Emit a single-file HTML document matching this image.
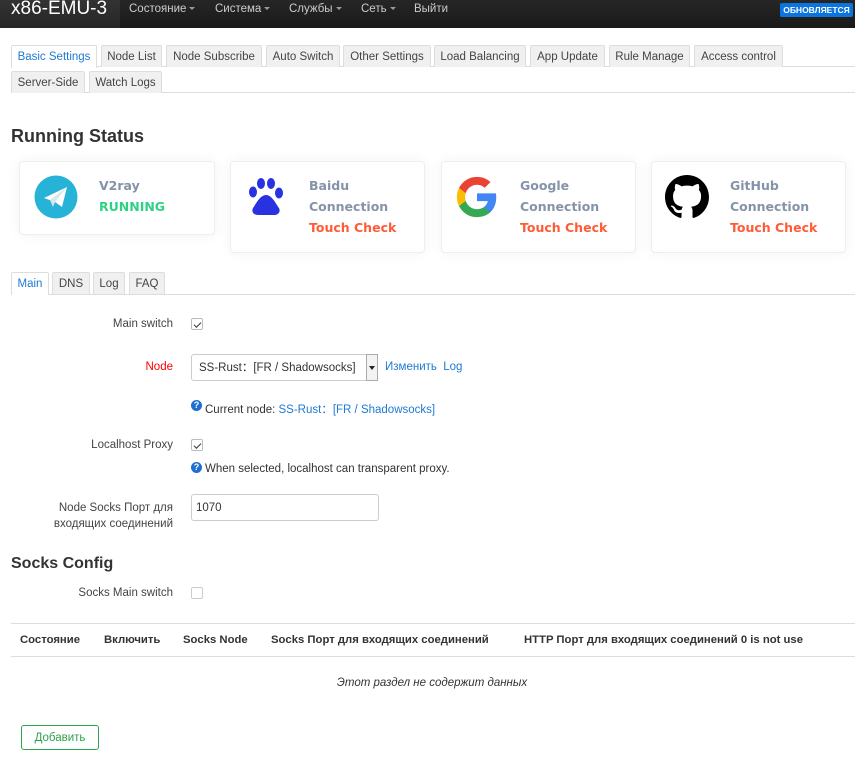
<!DOCTYPE html>
<html><head><meta charset="utf-8"><style>
*{box-sizing:border-box;margin:0;padding:0}
body{width:855px;height:757px;background:#fff;font-family:"Liberation Sans",sans-serif;color:#333;position:relative;overflow:hidden}
.a{position:absolute;white-space:nowrap}
.nav{left:0;top:0;width:855px;height:28px;background:linear-gradient(#262626,#1a1a1a)}
.brand{left:0;top:0;width:120px;height:28px;background:linear-gradient(#333,#262626);color:#fff;font-size:19px;padding:0 0 0 11px;line-height:18px}
.m{top:3px;color:#ccc;font-size:11.5px}
.car{display:inline-block;border-top:3px solid #999;border-left:3px solid transparent;border-right:3px solid transparent;vertical-align:middle;margin-left:3px}
.badge{left:780px;top:3px;width:73px;height:14px;background:#0b74de;border-radius:2px;color:#fff;font-size:8.5px;font-weight:bold;text-align:center;line-height:14px}
.tab{height:22px;border:1px solid #ddd;border-bottom:none;background:#f0f0f0;font-size:11.5px;text-align:center;line-height:23px;color:#444;border-radius:2px 2px 0 0}
.tab.on{background:#fff;color:#1e7ad2;height:23px}
.line{height:1px;background:#ddd}
.card{background:#fff;border:1px solid #eee;border-radius:4px;box-shadow:0 0 14px rgba(0,0,0,.05)}
.ct{font-family:"DejaVu Sans",sans-serif;font-weight:bold;font-size:12.5px;color:#8593a8}
.lbl{font-size:11.5px;color:#444;text-align:right;width:173px;left:0}
.cb{width:12px;height:12px;border:1px solid #bbb;border-radius:2px;background:#fff}
.ck{position:absolute;left:2px;width:7px;height:4px;border-left:1.5px solid #333;border-bottom:1.5px solid #333;transform:rotate(-45deg);top:3px}
.q{width:11px;height:11px;border-radius:50%;background:#1e6fd0;color:#fff;font-size:9px;font-weight:bold;text-align:center;line-height:11px}
.th{top:634px;font-size:11.3px;font-weight:bold;color:#333}
</style></head><body>
<div class="a nav"></div>
<div class="a brand">x86-EMU-3</div>
<div class="a m" style="left:129px">Состояние<span class="car"></span></div>
<div class="a m" style="left:215px">Система<span class="car"></span></div>
<div class="a m" style="left:289px">Службы<span class="car"></span></div>
<div class="a m" style="left:361px">Сеть<span class="car"></span></div>
<div class="a m" style="left:414px">Выйти</div>
<div class="a badge">ОБНОВЛЯЕТСЯ</div>

<div class="a line" style="left:11px;top:66px;width:844px"></div>
<div class="a tab on" style="left:11px;top:45px;width:86px">Basic Settings</div>
<div class="a tab" style="left:101px;top:45px;width:61px">Node List</div>
<div class="a tab" style="left:166px;top:45px;width:96px">Node Subscribe</div>
<div class="a tab" style="left:266px;top:45px;width:74px">Auto Switch</div>
<div class="a tab" style="left:343px;top:45px;width:88px">Other Settings</div>
<div class="a tab" style="left:434px;top:45px;width:92px">Load Balancing</div>
<div class="a tab" style="left:530px;top:45px;width:75px">App Update</div>
<div class="a tab" style="left:609px;top:45px;width:81px">Rule Manage</div>
<div class="a tab" style="left:694px;top:45px;width:89px">Access control</div>
<div class="a line" style="left:11px;top:92px;width:844px"></div>
<div class="a tab" style="left:11px;top:71px;width:74px">Server-Side</div>
<div class="a tab" style="left:89px;top:71px;width:73px">Watch Logs</div>

<div class="a" style="left:11px;top:126px;font-size:18px;font-weight:bold;color:#333">Running Status</div>

<div class="a card" style="left:19px;top:161px;width:196px;height:74px"></div>
<div class="a card" style="left:230px;top:161px;width:195px;height:92px"></div>
<div class="a card" style="left:441px;top:161px;width:195px;height:92px"></div>
<div class="a card" style="left:651px;top:161px;width:195px;height:92px"></div>

<svg class="a" style="left:34px;top:175px" width="44" height="44" viewBox="0 0 44 44"><circle cx="22" cy="22" r="21.5" fill="#27b2d8"/><path d="M10 23 L33 12 L28 32 L21 27 Z" fill="#fff"/><path d="M16 25 L33 12 L21 27 L19 32 Z" fill="#d8e6ee"/></svg>
<div class="a ct" style="left:99px;top:178px">V2ray</div>
<div class="a ct" style="left:99px;top:199px;color:#2fd283">RUNNING</div>

<svg class="a" style="left:248px;top:177px" width="36" height="38" viewBox="0 0 36 38"><ellipse cx="5" cy="15" rx="4" ry="5.5" fill="#2932e1"/><ellipse cx="13" cy="6.5" rx="4" ry="5.5" fill="#2932e1"/><ellipse cx="23" cy="6.5" rx="4" ry="5.5" fill="#2932e1"/><ellipse cx="31" cy="16" rx="4" ry="5.5" fill="#2932e1"/><path d="M18 18 C12 18 8 27 5 31 C3 35 6 38 10 38 L26 38 C30 38 33 35 31 31 C28 27 24 18 18 18 Z" fill="#2932e1"/></svg>
<div class="a ct" style="left:309px;top:178px">Baidu</div>
<div class="a ct" style="left:309px;top:199px">Connection</div>
<div class="a ct" style="left:309px;top:220px;color:#ff5b36">Touch Check</div>

<svg class="a" style="left:455px;top:175px" width="44" height="44" viewBox="0 0 48 48"><path fill="#4285F4" d="M45 24.5c0-1.6-.1-3.1-.4-4.5H24v8.5h11.8c-.5 2.7-2.1 5-4.4 6.6v5.5h7.1c4.2-3.9 6.5-9.6 6.5-16.1z"/><path fill="#34A853" d="M24 46c5.9 0 10.9-2 14.5-5.3l-7.1-5.5c-2 1.3-4.5 2.1-7.400 2.1-5.7 0-10.6-3.9-12.3-9.1H4.4v5.7C8 41.1 15.4 46 24 46z"/><path fill="#FBBC05" d="M11.7 28.2c-.4-1.3-.7-2.7-.7-4.2s.3-2.9.7-4.2v-5.7H4.4C2.9 17.1 2 20.4 2 24s.9 6.9 2.4 9.9l7.3-5.7z"/><path fill="#EA4335" d="M24 10.7c3.2 0 6.1 1.1 8.4 3.3l6.3-6.3C34.9 4.1 29.900 2 24 2 15.4 2 8 6.9 4.4 14.1l7.3 5.7c1.7-5.2 6.6-9.1 12.3-9.1z"/></svg>
<div class="a ct" style="left:520px;top:178px">Google</div>
<div class="a ct" style="left:520px;top:199px">Connection</div>
<div class="a ct" style="left:520px;top:220px;color:#ff5b36">Touch Check</div>

<svg class="a" style="left:665px;top:175px" width="44" height="44" viewBox="0 0 16 16"><path fill="#000" d="M8 0C3.58 0 0 3.58 0 8c0 3.54 2.29 6.53 5.47 7.59.4.07.55-.17.55-.38 0-.19-.01-.82-.01-1.490-2.01.37-2.53-.49-2.69-.94-.09-.23-.48-.94-.82-1.130-.28-.15-.68-.52-.01-.53.63-.01 1.080.58 1.230.82.72 1.21 1.870.87 2.330.66.07-.52.28-.87.51-1.070-1.78-.2-3.64-.89-3.64-3.95 0-.87.31-1.59.82-2.15-.08-.2-.36-1.02.08-2.12 0 0 .67-.21 2.2.82.64-.18 1.32-.27 2-.27.68 0 1.36.09 2 .27 1.53-1.04 2.2-.82 2.2-.82.44 1.1.16 1.92.08 2.12.51.56.82 1.27.82 2.15 0 3.07-1.87 3.75-3.65 3.95.29.25.54.73.54 1.48 0 1.07-.01 1.93-.01 2.2 0 .21.15.46.55.38A8.013 8.013 0 0016 8c0-4.42-3.58-8-8-8z"/></svg>
<div class="a ct" style="left:730px;top:178px">GitHub</div>
<div class="a ct" style="left:730px;top:199px">Connection</div>
<div class="a ct" style="left:730px;top:220px;color:#ff5b36">Touch Check</div>

<div class="a line" style="left:11px;top:294px;width:844px"></div>
<div class="a tab on" style="left:11px;top:272px;width:38px">Main</div>
<div class="a tab" style="left:52px;top:272px;width:38px">DNS</div>
<div class="a tab" style="left:93px;top:272px;width:32px">Log</div>
<div class="a tab" style="left:129px;top:272px;width:36px">FAQ</div>

<div class="a lbl" style="top:318px">Main switch</div>
<div class="a cb" style="left:191px;top:318px"><span class="ck"></span></div>

<div class="a lbl" style="top:361px;color:#f00">Node</div>
<div class="a" style="left:191px;top:354px;width:187px;height:27px;border:1px solid #ccc;border-radius:3px;font-size:11.5px;line-height:26px;padding-left:7px;color:#333">SS-Rust：[FR / Shadowsocks]</div>
<div class="a" style="left:366px;top:354px;width:12px;height:27px;border:1px solid #aaa;background:#f3f3f3"><span style="position:absolute;left:2px;top:11px;border-top:4px solid #222;border-left:3px solid transparent;border-right:3px solid transparent"></span></div>
<div class="a" style="left:385px;top:361px;font-size:11.5px;color:#1e7ad2">Изменить&nbsp;&nbsp;Log</div>

<div class="a q" style="left:191px;top:400px">?</div>
<div class="a" style="left:205px;top:401px;font-size:11.5px;color:#333">Current node: <span style="color:#1e7ad2">SS-Rust：[FR / Shadowsocks]</span></div>

<div class="a lbl" style="top:439px">Localhost Proxy</div>
<div class="a cb" style="left:191px;top:439px"><span class="ck"></span></div>
<div class="a q" style="left:191px;top:462px">?</div>
<div class="a" style="left:205px;top:463px;font-size:11.5px;color:#333">When selected, localhost can transparent proxy.</div>

<div class="a lbl" style="top:500px;line-height:16px">Node Socks Порт для<br>входящих соединений</div>
<div class="a" style="left:191px;top:494px;width:188px;height:27px;border:1px solid #ccc;border-radius:3px;font-size:11.5px;line-height:26px;padding-left:4px">1070</div>

<div class="a" style="left:11px;top:555px;font-size:16px;font-weight:bold;color:#333">Socks Config</div>
<div class="a lbl" style="top:587px">Socks Main switch</div>
<div class="a cb" style="left:191px;top:587px;border-color:#ccc"></div>

<div class="a line" style="left:11px;top:623px;width:844px"></div>
<div class="a line" style="left:11px;top:656px;width:844px"></div>
<div class="a th" style="left:20px">Состояние</div>
<div class="a th" style="left:104px">Включить</div>
<div class="a th" style="left:183px">Socks Node</div>
<div class="a th" style="left:271px">Socks Порт для входящих соединений</div>
<div class="a th" style="left:524px">HTTP Порт для входящих соединений 0 is not use</div>
<div class="a" style="left:0;width:864px;text-align:center;top:677px;font-size:11.5px;font-style:italic;color:#333">Этот раздел не содержит данных</div>

<div class="a" style="left:21px;top:725px;width:78px;height:25px;border:1px solid #2da34d;border-radius:3px;color:#2da34d;font-size:11.5px;text-align:center;line-height:25px">Добавить</div>
</body></html>
